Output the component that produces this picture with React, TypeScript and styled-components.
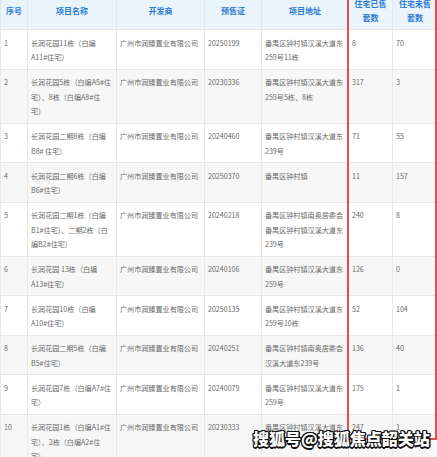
import React from "react";
import styled, { createGlobalStyle } from "styled-components";

const Global = createGlobalStyle`
  html, body { margin: 0; padding: 0; background: #ffffff; }
  body { width: 437px; height: 457px; overflow: hidden; font-family: "Noto Sans CJK SC", "Noto Sans", sans-serif; }
`;

const Page = styled.div`
  position: relative;
  width: 437px;
  height: 457px;
  overflow: hidden;
`;

const Table = styled.table`
  margin-top: -8px;
  width: 437px;
  table-layout: fixed;
  border-collapse: collapse;
  font-family: "Noto Sans CJK SC", "Noto Sans", sans-serif;
`;

const HeadCell = styled.th`
  background: #e9f4fc;
  color: #2d7cd3;
  font-size: 8px;
  font-weight: 700;
  line-height: 14px;
  height: 37px;
  padding: 0 2px;
  text-align: center;
  vertical-align: middle;
  white-space: pre-line;
  border: 1px solid #e3e8ee;
  border-top: none;
`;

const Row = styled.tr<{ $alt: boolean }>`
  background: ${(p) => (p.$alt ? "#f7f7f7" : "#ffffff")};
`;

const Cell = styled.td`
  color: #6a6a6a;
  font-size: 7.1px;
  line-height: 14.5px;
  padding: 5.5px 3px 4px 3px;
  vertical-align: top;
  text-align: left;
  white-space: pre-line;
  border: 1px solid #e8e8e8;
  overflow: hidden;
`;

const RedFrame = styled.div`
  position: absolute;
  left: 347px;
  top: -4px;
  width: 86px;
  height: 440px;
  border: 2px solid #ec4c4f;
  pointer-events: none;
`;

const Watermark = styled.div`
  position: absolute;
  left: 253px;
  top: 428px;
  font-family: "Noto Sans CJK SC", sans-serif;
  font-size: 16px;
  font-weight: 900;
  line-height: 20px;
  color: #ffffff;
  white-space: nowrap;
  text-shadow: 1px 0 0 #111, -1px 0 0 #111, 0 1px 0 #111, 0 -1px 0 #111,
    1px 1px 0 #111, -1px -1px 0 #111, 1px -1px 0 #111, -1px 1px 0 #111,
    1.5px 0 0 #111, 0 1.5px 0 #111;
`;

const widths = [27, 89, 88, 57, 87, 44, 45];
const headers = ["序号", "项目名称", "开发商", "预售证", "项目地址", "住宅已售\n套数", "住宅未售\n套数"];

const dev = "广州市润臻置业有限公司";

const rows: string[][] = [
  ["1", "长润花园11栋（白编\nA11#住宅）", dev, "20250199", "番禺区钟村镇汉溪大道东\n259号11栋", "8", "70"],
  ["2", "长润花园5栋（白编A5#住\n宅）、8栋（白编A8#住\n宅）", dev, "20230336", "番禺区钟村镇汉溪大道东\n259号5栋、8栋", "317", "3"],
  ["3", "长润花园二期8栋（白编\nB8# 住宅）", dev, "20240460", "番禺区钟村镇汉溪大道东\n239号", "71", "55"],
  ["4", "长润花园二期6栋（白编\nB6#住宅）", dev, "20250370", "番禺区钟村镇", "11", "157"],
  ["5", "长润花园二期1栋（白编\nB1#住宅）、二期2栋（白\n编B2#住宅）", dev, "20240218", "番禺区钟村镇南奥居委会\n番禺区钟村镇汉溪大道东\n239号", "240", "8"],
  ["6", "长润花园 13栋（白编\nA13#住宅）", dev, "20240106", "番禺区钟村镇汉溪大道东\n259号", "126", "0"],
  ["7", "长润花园10栋（白编\nA10#住宅）", dev, "20250135", "番禺区钟村镇汉溪大道东\n259号10栋", "52", "104"],
  ["8", "长润花园二期5栋（白编\nB5#住宅）", dev, "20240251", "番禺区钟村镇南奥居委会\n汉溪大道东239号", "136", "40"],
  ["9", "长润花园7栋（白编A7#住\n宅）", dev, "20240079", "番禺区钟村镇汉溪大道东\n259号", "175", "1"],
  ["10", "长润花园1栋（白编A1#住\n宅）、2栋（白编A2#住\n宅）", dev, "20230333", "番禺区钟村镇汉溪大道东\n259号1栋、2栋", "247", "1"],
];

export default function App() {
  return (
    <Page>
      <Global />
      <Table>
        <colgroup>
          {widths.map((w, i) => (
            <col key={i} style={{ width: w }} />
          ))}
        </colgroup>
        <thead>
          <tr>
            {headers.map((h) => (
              <HeadCell key={h}>{h}</HeadCell>
            ))}
          </tr>
        </thead>
        <tbody>
          {rows.map((r, i) => (
            <Row key={r[0]} $alt={i % 2 === 1}>
              {r.map((c, j) => (
                <Cell key={j}>{c}</Cell>
              ))}
            </Row>
          ))}
        </tbody>
      </Table>
      <RedFrame />
      <Watermark>搜狐号@搜狐焦点韶关站</Watermark>
    </Page>
  );
}
